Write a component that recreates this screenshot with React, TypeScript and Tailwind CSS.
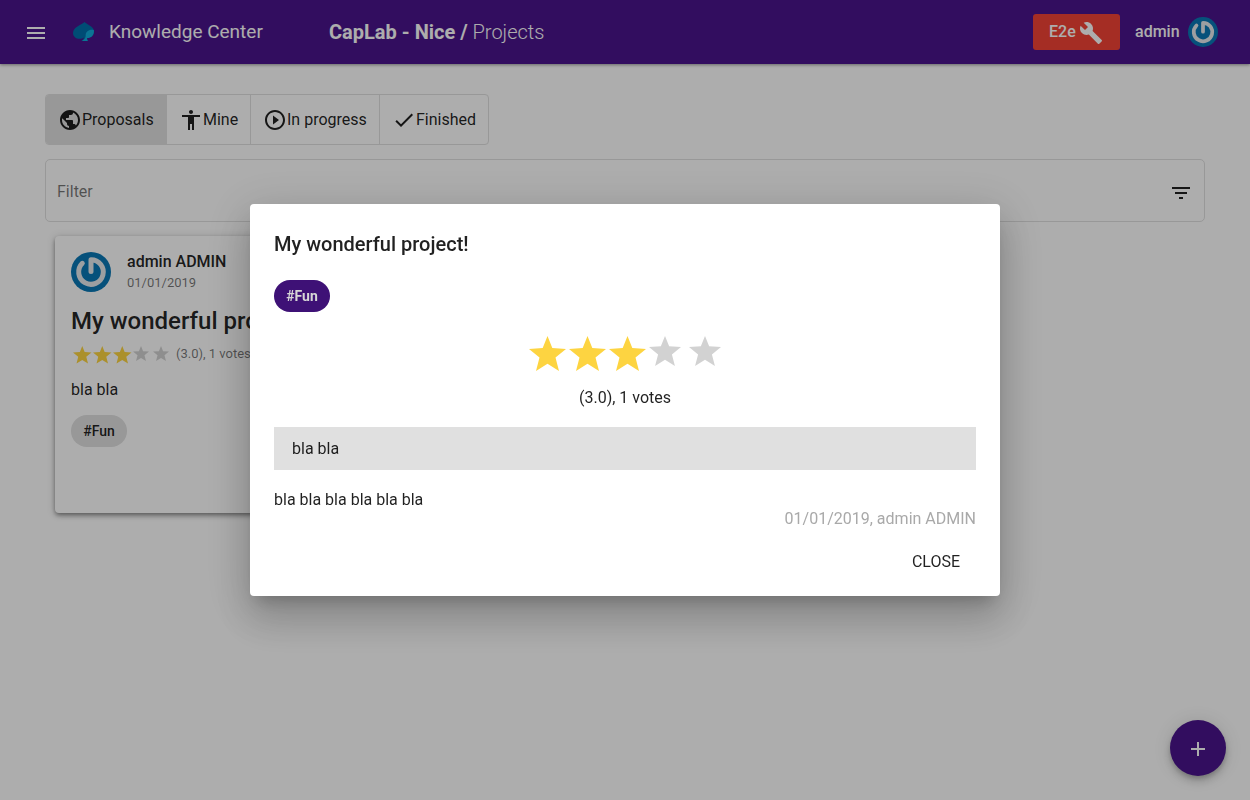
import React from "react";
import {
  MdMenu,
  MdBuild,
  MdPublic,
  MdAccessibility,
  MdPlayCircleOutline,
  MdCheck,
  MdFilterList,
  MdAdd,
} from "react-icons/md";

function Spade() {
  return (
    <svg viewBox="0 0 22 20" className="h-5 w-[22px]">
      <path
        d="M11.500 0C9 2.600 0 5 0 11c0 3.500 3 5.800 6.500 5.800 2 0 3.500-.5 4.500-1.300-.2 1.500-1 2.500-2.500 3.500h6.500c-.6-.8-1-1.500-.9-3 4 0 6.900-2.500 6.900-6.500C21 4.500 14.500 3 11.500 0z"
        fill="#0070ad"
      />
      <path
        d="M21 8.200C18 6.800 13 9 12.700 12.500c-.1 1.200.1 2-.6 3.500-.9 1.600-2 2.400-3.600 3h6.500c-.6-.8-1-1.500-.9-3 4 0 7-2.500 6.900-7.800z"
        fill="#12abdb"
      />
    </svg>
  );
}

function Avatar({ className }: { className: string }) {
  return (
    <svg viewBox="0 0 40 40" className={className}>
      <circle cx="20" cy="20" r="20" fill="#0a78b5" />
      <path
        d="M20 19.500V7.700A12.300 12.300 0 1 1 11.300 11.300"
        fill="none"
        stroke="#e6eaee"
        strokeWidth="5"
        strokeLinecap="round"
        strokeLinejoin="round"
      />
    </svg>
  );
}

function Star({ on, className }: { on: boolean; className: string }) {
  return (
    <svg viewBox="0 0 37 35" preserveAspectRatio="none" className={className}>
      <path
        d="M18.500 0L23.300 12L37 12.900L26.500 21.500L30 35L18.500 27.800L7 35L10.500 21.500L0 12.900L13.700 12Z"
        fill={on ? "#fdd441" : "#d2d2d2"}
      />
    </svg>
  );
}

const rating = [true, true, true, false, false];

const tabs = [
  { label: "Proposals", Icon: MdPublic, box: "w-[120px] bg-[#e0e0e0]" },
  { label: "Mine", Icon: MdAccessibility, box: "w-[84px] border-l border-[#e0e0e0]" },
  { label: "In progress", Icon: MdPlayCircleOutline, box: "w-[129px] border-l border-[#e0e0e0]" },
  { label: "Finished", Icon: MdCheck, box: "w-[109px] border-l border-[#e0e0e0]" },
];

function Header() {
  return (
    <header className="flex h-16 items-center bg-[#4a148c] text-white shadow-[0_1px_3px_rgba(0,0,0,0.4)]">
      <MdMenu className="ml-6 mt-0.5 size-6" />
      <div className="ml-[25px] flex w-9 shrink-0">
        <Spade />
      </div>
      <h1 className="w-[220px] shrink-0 text-[19px] leading-8">Knowledge Center</h1>
      <div className="grow text-[20px] font-light leading-8">
        <b className="font-bold">CapLab - Nice /</b> Projects
      </div>
      <button className="flex h-9 w-[87px] items-center rounded-[3px] bg-[#f44336] pl-4 text-[16px] font-medium">
        E2e
        <MdBuild className="ml-[3px] mt-0.5 size-6" />
      </button>
      <span className="ml-[15px] w-[53px] text-[16px] font-medium">admin</span>
      <Avatar className="mr-8 size-[30px]" />
    </header>
  );
}

function ProjectCard() {
  return (
    <article className="ml-2.5 mt-3.5 h-[277px] w-[560px] rounded bg-white p-4 shadow-[0_2px_4px_-1px_rgba(0,0,0,0.3),0_3px_5px_0_rgba(0,0,0,0.2),0_1px_8px_0_rgba(0,0,0,0.18)]">
      <div className="flex gap-4">
        <Avatar className="size-10" />
        <div>
          <div className="h-5 text-[16px] font-medium leading-5">admin ADMIN</div>
          <div className="h-5 text-[13px] leading-[22px] text-black/54">01/01/2019</div>
        </div>
      </div>
      <h2 className="mt-[13px] text-[24px] font-medium leading-8">My wonderful project!</h2>
      <div className="mt-[9px] flex h-5 pl-0.5">
        {rating.map((on, i) => (
          <span key={i} className="w-5 shrink-0">
            <Star on={on} className={on ? "h-[17.500px] w-[18.500px]" : "h-[15px] w-4"} />
          </span>
        ))}
        <span className="ml-[3px] text-[13px] leading-4 text-black/54">(3.0), 1 votes</span>
      </div>
      <p className="mt-3 text-[16px] leading-6">bla bla</p>
      <span className="mt-[13px] flex h-8 w-14 items-center justify-center rounded-full bg-[#e0e0e0] text-[14px] font-medium leading-5">
        #Fun
      </span>
    </article>
  );
}

function ProjectDialog() {
  return (
    <section className="h-[392px] w-[750px] rounded bg-white px-6 pt-6 shadow-[0_11px_15px_-7px_rgba(0,0,0,0.2),0_24px_38px_3px_rgba(0,0,0,0.14),0_9px_46px_8px_rgba(0,0,0,0.12)]">
      <h2 className="text-[20px] font-medium leading-8">My wonderful project!</h2>
      <span className="mt-5 flex h-8 w-14 items-center justify-center rounded-full bg-[#3e1176] text-[14px] font-bold text-[#d6d6d6]">
        #Fun
      </span>
      <div className="mt-6 flex h-10 pl-[255px]">
        {rating.map((on, i) => (
          <span key={i} className="w-10">
            <Star on={on} className={on ? "h-[35px] w-[37px]" : "h-[30px] w-8"} />
          </span>
        ))}
      </div>
      <p className="mt-2.5 text-center text-[16px] leading-6">(3.0), 1 votes</p>
      <div className="mt-[17px] h-[43px] bg-[#e0e0e0] pl-[18px] text-[16px] leading-[43px]">bla bla</div>
      <p className="mt-5 text-[16px] leading-[19px]">bla bla bla bla bla bla</p>
      <p className="text-right text-[16px] leading-[19px] text-[#a9a9a9]">01/01/2019, admin ADMIN</p>
      <div className="mt-4 flex justify-end pr-4">
        <button className="text-[16px] leading-9">CLOSE</button>
      </div>
    </section>
  );
}

export default function App() {
  return (
    <div className="h-[800px] overflow-hidden bg-white font-[Roboto,sans-serif] text-black/87">
      <Header />
      <main className="px-[45px] pt-[30px]">
        <nav className="flex h-[51px] w-[444px] overflow-hidden rounded border border-[#e0e0e0]">
          {tabs.map(({ label, Icon, box }) => (
            <button key={label} className={`flex shrink-0 items-center pl-3 text-[16px] ${box}`}>
              <Icon className="size-6 shrink-0" />
              <span className="whitespace-nowrap">{label}</span>
            </button>
          ))}
        </nav>
        <div className="mt-3.5 flex h-[63px] items-center justify-between rounded-[5px] border border-[#e0e0e0] pl-[11px] pr-[11px] text-[16px]">
          <span className="pt-0.5 text-black/54">Filter</span>
          <MdFilterList className="mt-1 size-6" />
        </div>
        <ProjectCard />
      </main>
      <button className="fixed bottom-6 right-6 flex size-14 items-center justify-center rounded-full bg-[#4a148c] text-white shadow-[0_3px_5px_-1px_rgba(0,0,0,0.2),0_6px_10px_0_rgba(0,0,0,0.14),0_1px_18px_0_rgba(0,0,0,0.12)]">
        <MdAdd className="mt-0.5 size-6" />
      </button>
      <div className="fixed inset-0 flex items-center justify-center bg-black/32">
        <ProjectDialog />
      </div>
    </div>
  );
}
